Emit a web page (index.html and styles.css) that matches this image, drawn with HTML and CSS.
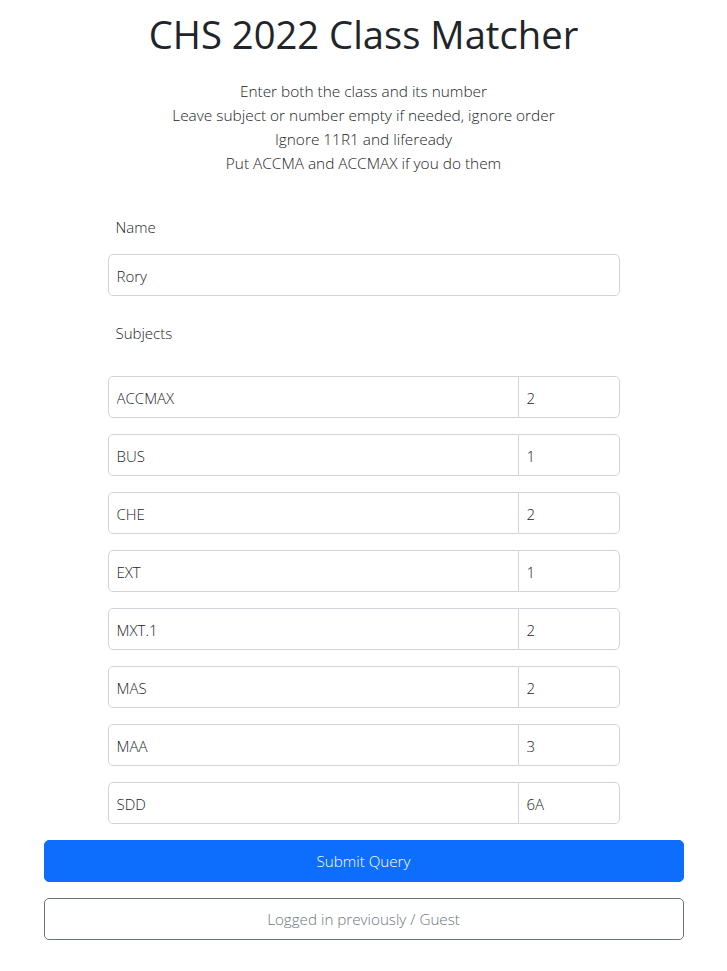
FILE: index.html
```html
<!DOCTYPE html>
<html lang="en">
<head>
<meta charset="utf-8">
<title>CHS 2022 Class Matcher</title>
<link rel="stylesheet" href="styles.css">
</head>
<body>
<div class="container">
  <h1 class="title">CHS 2022 Class Matcher</h1>
  <p class="intro">
    Enter both the class and its number<br>
    Leave subject or number empty if needed, ignore order<br>
    Ignore 11R1 and lifeready<br>
    Put ACCMA and ACCMAX if you do them
  </p>
  <form class="form">
    <div class="fields">
      <label class="label" for="name">Name</label>
      <input class="field" id="name" type="text" value="Rory">
      <div class="label label-subjects">Subjects</div>
      <div class="pairs">
        <div class="pair"><input class="field subj" type="text" value="ACCMAX"><input class="field num" type="text" value="2"></div>
        <div class="pair"><input class="field subj" type="text" value="BUS"><input class="field num" type="text" value="1"></div>
        <div class="pair"><input class="field subj" type="text" value="CHE"><input class="field num" type="text" value="2"></div>
        <div class="pair"><input class="field subj" type="text" value="EXT"><input class="field num" type="text" value="1"></div>
        <div class="pair"><input class="field subj" type="text" value="MXT.1"><input class="field num" type="text" value="2"></div>
        <div class="pair"><input class="field subj" type="text" value="MAS"><input class="field num" type="text" value="2"></div>
        <div class="pair"><input class="field subj" type="text" value="MAA"><input class="field num" type="text" value="3"></div>
        <div class="pair"><input class="field subj" type="text" value="SDD"><input class="field num" type="text" value="6A"></div>
      </div>
    </div>
    <div class="actions">
      <button class="btn btn-primary" type="submit">Submit Query</button>
      <button class="btn btn-outline" type="button">Logged in previously / Guest</button>
    </div>
  </form>
</div>
</body>
</html>
```

FILE: styles.css
```css
* { box-sizing: border-box; }

body {
  margin: 0;
  font-family: "Open Sans", "Liberation Sans", sans-serif;
  font-weight: 300;
  font-size: 16px;
  line-height: 1.5;
  color: #212529;
  background: #fff;
}

.container {
  width: 640px;
  margin: 0 auto;
}

.title {
  margin: 10px 0 0;
  font-size: 38.2px;
  line-height: 48px;
  font-weight: 400;
  text-align: center;
}

.intro {
  margin: 22px 0 0;
  font-size: 15.4px;
  line-height: 24px;
  text-align: center;
}

.form {
  margin-top: 39px;
}

.fields {
  width: 512px;
  margin: 0 auto;
}

.label {
  display: block;
  padding-left: 8px;
  line-height: 24px;
  font-size: 15px;
  margin-bottom: 15px;
}

.label-subjects {
  margin-top: 25px;
  margin-bottom: 31px;
}

.field {
  display: block;
  width: 100%;
  height: 42px;
  padding: 1px 8px 0;
  font: inherit;
  font-size: 15px;
  color: #212529;
  background: #fff;
  border: 1px solid #ced4da;
  border-radius: 5px;
  outline: none;
}

.pairs {
  display: flex;
  flex-direction: column;
  gap: 16px;
}

.pair {
  display: flex;
}

.pair .subj {
  flex: 0 0 411px;
  border-radius: 5px 0 0 5px;
}

.pair .num {
  flex: 1;
  min-width: 0;
  margin-left: -1px;
  border-radius: 0 5px 5px 0;
}

.actions {
  margin-top: 16px;
  display: flex;
  flex-direction: column;
  gap: 16px;
}

.btn {
  display: block;
  width: 100%;
  height: 42px;
  padding-top: 2px;
  font: inherit;
  font-size: 15.2px;
  border-radius: 5px;
  cursor: pointer;
}

.btn-primary {
  background: #0d6efd;
  border: 1px solid #0d6efd;
  color: #fff;
}

.btn-outline {
  background: #fff;
  border: 1px solid #6c757d;
  color: #6c757d;
}
```
